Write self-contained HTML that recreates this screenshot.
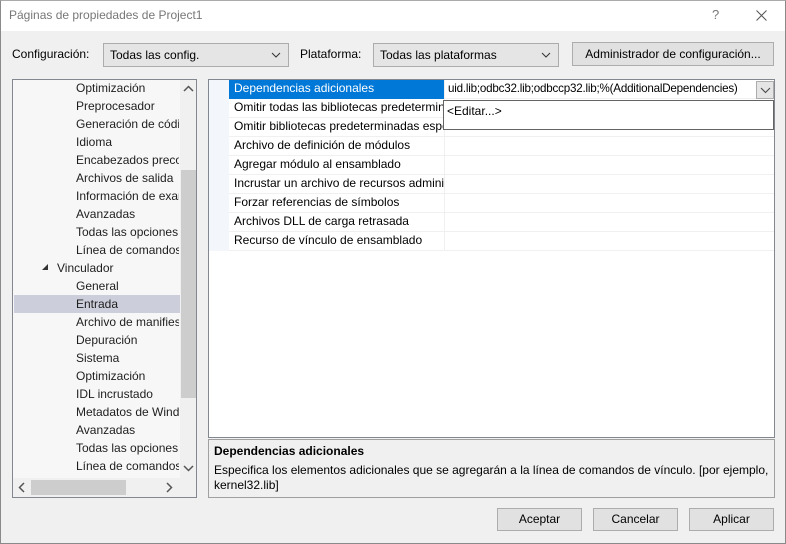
<!DOCTYPE html>
<html><head><meta charset="utf-8"><style>
*{box-sizing:border-box;margin:0;padding:0}
body{width:786px;height:544px;overflow:hidden;background:#f0f0f0;font-family:"Liberation Sans",sans-serif;font-size:12px;color:#000;position:relative}
.a{position:absolute;white-space:nowrap}
.win{position:absolute;left:0;top:0;width:786px;height:544px;border:1px solid #8a8a8a;border-top-color:#aaa}
.combo{position:absolute;height:24px;border:1px solid #acacac;background:#e5e5e5;padding:4px 6px;line-height:14px}
.chev{position:absolute;right:6px;top:5px;width:12px;height:12px}
.btn{position:absolute;height:23px;border:1px solid #adadad;background:#e1e1e1;text-align:center;line-height:21px}
.tree{position:absolute;left:12px;top:79px;width:185px;height:419px;border:1px solid #828790;background:#f7f7f7;overflow:hidden}
.ti{position:absolute;left:63px;height:18px;line-height:16px;color:#1e1e1e;width:103px;overflow:hidden;white-space:nowrap}
.grid{position:absolute;left:208px;top:79px;width:567px;height:359px;border:1px solid #828790;background:#fff}
.gr{position:absolute;left:20px;width:545px;height:19px;border-bottom:1px solid #f0f0f0;line-height:17px}
.gn{position:absolute;left:0;width:216px;padding-left:5px;overflow:hidden;white-space:nowrap;height:19px;border-right:1px solid #f0f0f0}
</style></head><body>
<div class="win"></div>
<div class="a" style="left:1px;top:1px;width:784px;height:30px;background:#fff"></div>
<div class="a" style="left:9px;top:8px;color:#777;font-size:12px">Páginas de propiedades de Project1</div>
<div class="a" style="left:712px;top:7px;color:#777;font-size:13px">?</div>
<svg class="a" style="left:756px;top:10px" width="11" height="11"><path d="M0.5 0.5L10.5 10.5M10.5 0.5L0.5 10.5" stroke="#555" stroke-width="1"/></svg>

<div class="a" style="left:12px;top:47px">Configuración:</div>
<div class="combo" style="left:103px;top:43px;width:186px">Todas las config.<svg class="chev" viewBox="0 0 12 12"><path d="M2 4l4 4 4-4" fill="none" stroke="#333"/></svg></div>
<div class="a" style="left:300px;top:47px">Plataforma:</div>
<div class="combo" style="left:373px;top:43px;width:186px">Todas las plataformas<svg class="chev" viewBox="0 0 12 12"><path d="M2 4l4 4 4-4" fill="none" stroke="#333"/></svg></div>
<div class="btn" style="left:572px;top:42px;width:202px;height:24px;line-height:22px">Administrador de configuración...</div>

<div class="tree">
<div class="ti" style="top:0">Optimización</div>
<div class="ti" style="top:18px">Preprocesador</div>
<div class="ti" style="top:36px">Generación de código</div>
<div class="ti" style="top:54px">Idioma</div>
<div class="ti" style="top:72px">Encabezados precompilados</div>
<div class="ti" style="top:90px">Archivos de salida</div>
<div class="ti" style="top:108px">Información de examen</div>
<div class="ti" style="top:126px">Avanzadas</div>
<div class="ti" style="top:144px">Todas las opciones</div>
<div class="ti" style="top:162px">Línea de comandos</div>
<svg class="a" style="left:29px;top:184px" width="7" height="7"><path d="M6 0L6 6L0 6Z" fill="#333"/></svg>
<div class="ti" style="top:180px;left:44px">Vinculador</div>
<div class="ti" style="top:198px">General</div>
<div class="a" style="left:1px;top:215px;width:166px;height:18px;background:#cccedb"></div>
<div class="ti" style="top:216px">Entrada</div>
<div class="ti" style="top:234px">Archivo de manifiesto</div>
<div class="ti" style="top:252px">Depuración</div>
<div class="ti" style="top:270px">Sistema</div>
<div class="ti" style="top:288px">Optimización</div>
<div class="ti" style="top:306px">IDL incrustado</div>
<div class="ti" style="top:324px">Metadatos de Windows</div>
<div class="ti" style="top:342px">Avanzadas</div>
<div class="ti" style="top:360px">Todas las opciones</div>
<div class="ti" style="top:378px">Línea de comandos</div>
<div class="a" style="left:167px;top:0;width:17px;height:398px;background:#f0f0f0"></div>
<div class="a" style="left:168px;top:90px;width:15px;height:228px;background:#cdcdcd"></div>
<svg class="a" style="left:170px;top:5px" width="11" height="8"><path d="M1 6l4.5-4.5L10 6" fill="none" stroke="#555" stroke-width="1.5"/></svg>
<svg class="a" style="left:170px;top:384px" width="11" height="8"><path d="M1 2l4.5 4.5L10 2" fill="none" stroke="#555" stroke-width="1.5"/></svg>
<div class="a" style="left:0;top:398px;width:184px;height:19px;background:#f0f0f0"></div>
<div class="a" style="left:18px;top:400px;width:95px;height:15px;background:#cdcdcd"></div>
<svg class="a" style="left:5px;top:402px" width="8" height="11"><path d="M6 1L1.5 5.5L6 10" fill="none" stroke="#555" stroke-width="1.5"/></svg>
<svg class="a" style="left:152px;top:402px" width="8" height="11"><path d="M2 1l4.5 4.5L2 10" fill="none" stroke="#555" stroke-width="1.5"/></svg>
</div>

<div class="grid">
<div class="a" style="left:0;top:0;width:20px;height:171px;background:#f3f6fb"></div>
<div class="gr" style="top:0;background:#fff"><div class="gn" style="background:#0078d7;color:#fff">Dependencias adicionales</div><div class="a" style="left:219px;top:0;font-size:11.6px;letter-spacing:-0.2px">uid.lib;odbc32.lib;odbccp32.lib;%(AdditionalDependencies)</div></div>
<div class="gr" style="top:19px"><div class="gn">Omitir todas las bibliotecas predeterminadas</div></div>
<div class="gr" style="top:38px"><div class="gn">Omitir bibliotecas predeterminadas específicas</div></div>
<div class="gr" style="top:57px"><div class="gn">Archivo de definición de módulos</div></div>
<div class="gr" style="top:76px"><div class="gn">Agregar módulo al ensamblado</div></div>
<div class="gr" style="top:95px"><div class="gn">Incrustar un archivo de recursos administrados</div></div>
<div class="gr" style="top:114px"><div class="gn">Forzar referencias de símbolos</div></div>
<div class="gr" style="top:133px"><div class="gn">Archivos DLL de carga retrasada</div></div>
<div class="gr" style="top:152px"><div class="gn">Recurso de vínculo de ensamblado</div></div>
<div class="a" style="left:547px;top:1px;width:18px;height:18px;border:1px solid #adadad;background:#e5e5e5"><svg style="position:absolute;left:3px;top:4px" width="11" height="8"><path d="M1 2l4.5 4.5L10 2" fill="none" stroke="#444"/></svg></div>
<div class="a" style="left:234px;top:20px;width:331px;height:30px;border:1px solid #646464;background:#fff;padding:2px 3px;line-height:16px">&lt;Editar...&gt;</div>
</div>

<div class="a" style="left:208px;top:439px;width:567px;height:59px;border:1px solid #a0a0a0;background:#f0f0f0"></div>
<div class="a" style="left:214px;top:444px;font-weight:bold">Dependencias adicionales</div>
<div class="a" style="left:214px;top:463px">Especifica los elementos adicionales que se agregarán a la línea de comandos de vínculo. [por ejemplo,</div>
<div class="a" style="left:214px;top:478px">kernel32.lib]</div>

<div class="btn" style="left:497px;top:508px;width:85px">Aceptar</div>
<div class="btn" style="left:593px;top:508px;width:85px">Cancelar</div>
<div class="btn" style="left:689px;top:508px;width:85px">Aplicar</div>
</body></html>
